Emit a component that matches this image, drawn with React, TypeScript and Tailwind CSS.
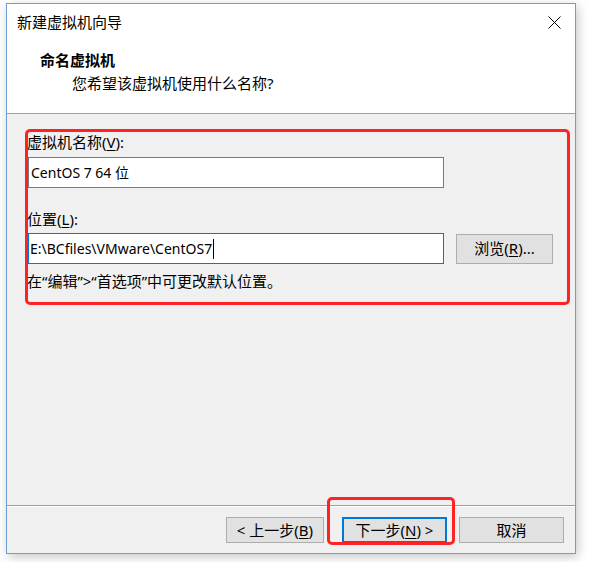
import React from 'react';

const font = { fontFamily: '"Noto Sans", "Noto Sans CJK SC", sans-serif' };

const Key: React.FC<{ k: string }> = ({ k }) => <span className="underline underline-offset-2">{k}</span>;

const Button: React.FC<{ width: string; primary?: boolean; children: React.ReactNode }> = ({ width, primary, children }) => (
  <div
    className={`${width} h-[26px] flex items-center justify-center bg-[#e1e1e1] text-[15px] leading-none text-black border ${
      primary ? 'border-[#0078d7] shadow-[inset_0_0_0_1px_#0078d7]' : 'border-[#adadad]'
    }`}
  >
    {children}
  </div>
);

export default function App() {
  return (
    <div className="w-[596px] h-[562px] bg-white relative overflow-hidden" style={font}>
      <div className="ml-[6px] mt-[3px] w-[570px] h-[551px] border border-[#6e9dd4] bg-[#f0f0f0] flex flex-col shadow-[2px_3px_10px_rgba(0,0,0,0.22)]">
        {/* title bar + header */}
        <div className="bg-white h-[110px] border-b border-[#a0a0a0]">
          <div className="h-[36px] flex items-center justify-between pl-[10px] pr-[14px]">
            <span className="text-[15px] text-black">新建虚拟机向导</span>
            <svg width="13" height="13" viewBox="0 0 13 13" className="text-black">
              <path d="M0.5 0.5 L12.5 12.5 M12.5 0.5 L0.5 12.5" stroke="currentColor" strokeWidth="1" fill="none" />
            </svg>
          </div>
          <div className="mt-[10px] pl-[33px] text-[15px] leading-[20px] font-bold text-black">命名虚拟机</div>
          <div className="mt-[3px] pl-[65px] text-[15px] leading-[20px] text-black">您希望该虚拟机使用什么名称?</div>
        </div>

        {/* body */}
        <div className="flex-1">
          <div className="ml-[18px] mt-[15px] w-[545px] h-[176px] border-[3px] border-[#f22] rounded-[5px]">
            <div className="text-[15px] leading-[20px] text-black -ml-[1px]">
              虚拟机名称(<Key k="V" />):
            </div>
            <div className="mt-[5px] w-[416px] h-[31px] bg-white border border-[#7a7a7a] flex items-center pl-[2px] text-[14px] text-black">
              CentOS 7 64 位
            </div>
            <div className="mt-[21px] text-[15px] leading-[20px] text-black -ml-[1px]">
              位置(<Key k="L" />):
            </div>
            <div className="mt-[4px] flex items-center gap-[12px]">
              <div className="w-[416px] h-[31px] bg-white border border-[#0078d7] flex items-center pl-[1px] text-[14px] text-black">
                E:\BCfiles\VMware\CentOS7
                <span className="inline-block w-[1px] h-[20px] bg-black ml-[1px]" />
              </div>
              <div className="w-[97px] h-[30px] flex items-center justify-center bg-[#e1e1e1] border border-[#adadad] text-[15px] text-black">
                浏览(<Key k="R" />)...
              </div>
            </div>
            <div className="mt-[7px] text-[15px] leading-[20px] text-black -ml-[1px]">
              在“编辑”&gt;“首选项”中可更改默认位置。
            </div>
          </div>
        </div>

        {/* footer */}
        <div className="h-[48px] border-t border-[#a0a0a0]">
          <div className="border-t border-white h-full pt-[10px] flex justify-end pr-[11px]">
            <Button width="w-[98px]">
              &lt; 上一步(<Key k="B" />)
            </Button>
            <div className="w-[18px]" />
            <Button width="w-[105px]" primary>
              下一步(<Key k="N" />) &gt;
            </Button>
            <div className="w-[12px]" />
            <Button width="w-[105px]">取消</Button>
          </div>
        </div>
      </div>

      {/* annotation around the next button */}
      <div className="absolute left-[327px] top-[497px] w-[128px] h-[48px] border-[3px] border-[#f22] rounded-[5px]" />
    </div>
  );
}
